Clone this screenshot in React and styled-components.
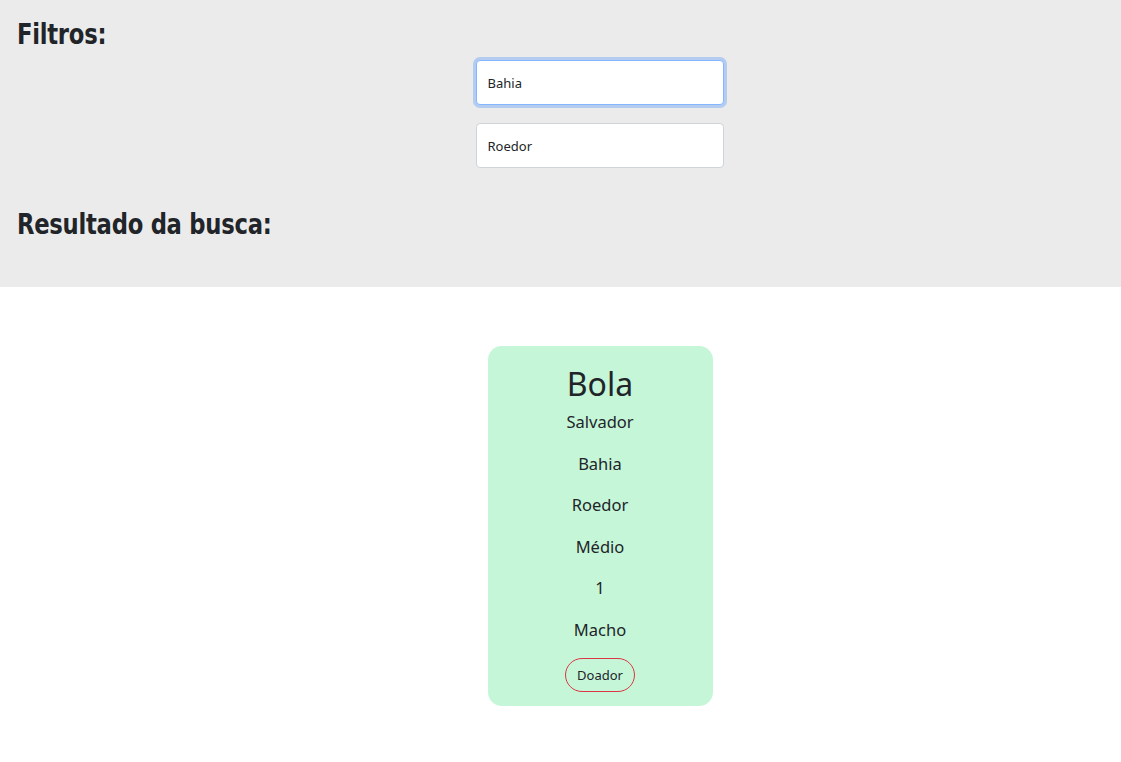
import React from "react";
import styled, { createGlobalStyle } from "styled-components";

const Global = createGlobalStyle`
  html, body { margin: 0; padding: 0; background: #ffffff; }
  body { font-family: "Noto Sans", "Open Sans", sans-serif; color: #212529; }
  * { box-sizing: border-box; }
`;

const Header = styled.section`
  background: #ebebeb;
  height: 287px;
  padding: 15px 17px 0;
  display: flex;
  flex-direction: column;
  align-items: flex-start;
`;

const Heading = styled.h2`
  margin: 0;
  font-family: "DejaVu Sans", sans-serif;
  font-stretch: condensed;
  font-weight: 700;
  font-size: 29px;
  line-height: 38px;
  color: #212529;
  letter-spacing: -0.3px;
  transform: scaleX(0.87);
  transform-origin: left center;
  white-space: nowrap;
`;

const Filters = styled.form`
  align-self: stretch;
  display: flex;
  flex-direction: column;
  align-items: center;
  gap: 18px;
  margin: 7px 0 37px;
  padding-left: 78px;
`;

const Input = styled.input`
  width: 248px;
  height: 45px;
  padding: 0 11px;
  font-family: "Noto Sans", "Open Sans", sans-serif;
  font-size: 13px;
  color: #212529;
  background: #fff;
  border: 1px solid ${(p) => (p.$focused ? "#86b7fe" : "#ced4da")};
  border-radius: 4px;
  outline: none;
  box-shadow: ${(p) => (p.$focused ? "0 0 0 3px rgba(13,110,253,0.25)" : "none")};
`;

const Results = styled.main`
  display: flex;
  justify-content: center;
  padding: 59px 0 0 79px;
`;

const Card = styled.article`
  width: 225px;
  height: 360px;
  background: #c6f6d8;
  border-radius: 14px;
  display: flex;
  flex-direction: column;
  align-items: center;
  padding-top: 18px;
`;

const Name = styled.h3`
  margin: 0 0 6px;
  font-family: "Noto Sans", "Open Sans", sans-serif;
  font-weight: 400;
  font-size: 32px;
  line-height: 40px;
  color: #212529;
`;

const Info = styled.p`
  margin: 0 0 17.5px;
  font-size: 16.5px;
  line-height: 24px;
  color: #212529;
`;

const Tag = styled.button`
  margin-top: -1px;
  height: 34px;
  padding: 0 11px;
  border: 1px solid #dc3545;
  border-radius: 17px;
  background: transparent;
  font-family: "Noto Sans", "Open Sans", sans-serif;
  font-size: 13px;
  color: #212529;
`;

export default function App() {
  const info = ["Salvador", "Bahia", "Roedor", "Médio", "1", "Macho"];
  return (
    <>
      <Global />
      <Header>
        <Heading>Filtros:</Heading>
        <Filters>
          <Input defaultValue="Bahia" $focused />
          <Input defaultValue="Roedor" />
        </Filters>
        <Heading>Resultado da busca:</Heading>
      </Header>
      <Results>
        <Card>
          <Name>Bola</Name>
          {info.map((t) => (
            <Info key={t}>{t}</Info>
          ))}
          <Tag type="button">Doador</Tag>
        </Card>
      </Results>
    </>
  );
}
